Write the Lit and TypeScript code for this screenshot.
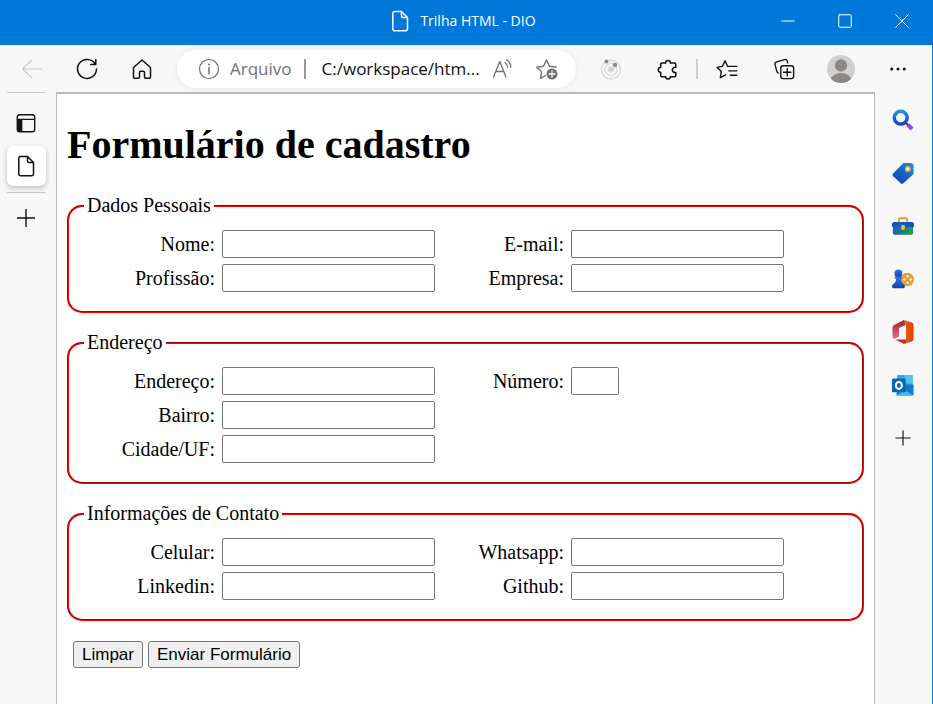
import { LitElement, html, svg, css, TemplateResult } from "lit";
import { customElement } from "lit/decorators.js";

const icon = (size: number, content: TemplateResult) => html`<svg
  width=${size}
  height=${size}
  viewBox="0 0 24 24"
  fill="none"
  stroke="currentColor"
  stroke-width="1.5"
  stroke-linecap="round"
  stroke-linejoin="round"
  aria-hidden="true"
>${content}</svg>`;

const plus = svg`<path d="M12 3v18M3 12h18" stroke-linecap="butt" stroke-width="1.4"/>`;
const page = svg`<path d="M6.500 2.500h7l6 6V20a1.700 1.700 0 0 1-1.700 1.700H6.500A1.700 1.700 0 0 1 4.800 20V4.200a1.700 1.700 0 0 1 1.700-1.700zM13.500 2.500V7A1.500 1.500 0 0 0 15 8.500h4.500"/>`;
const back = svg`<path d="M22 12H3M11.500 3.500 2.500 12l9 8.500" stroke-width="1.2"/>`;
const reload = svg`<path d="M20 6.800A9.500 9.500 0 1 0 21.500 12M20.800 2.500v5h-5"/>`;
const home = svg`<path d="M3.500 10.500 12 3l8.500 7.500V20a1.300 1.300 0 0 1-1.300 1.300h-3.400a1.300 1.300 0 0 1-1.300-1.300v-4.500a1.200 1.200 0 0 0-1.200-1.200h-2.600a1.200 1.200 0 0 0-1.200 1.200V20a1.300 1.300 0 0 1-1.300 1.300H4.800A1.300 1.300 0 0 1 3.500 20z"/>`;
const info = svg`<circle cx="12" cy="12" r="9.500" stroke-width="1.2"/><path d="M12 10.500v6.300"/><circle cx="12" cy="7.500" r="1" fill="currentColor" stroke="none"/>`;
const readAloud = svg`<path d="M2.500 20 8.800 4.500 15 20M4.800 14.500h8M14 5.500q2.500 1.500 2.500 4.500M15.500 2.800q4.500 2.500 4.200 7.500" stroke-width="1.3"/>`;
const starAdd = svg`<path d="M10.500 18.500 5.500 21.300 6.600 14.800 1.800 10.200 8.500 9.200 11.500 3 14.500 9.200 21.200 10.200" stroke-width="1.4"/><circle cx="17" cy="17" r="5.500" fill="currentColor" stroke="none"/><path d="M17 14v6M14 17h6" stroke="#fff" stroke-width="1.3"/>`;
const orbit = svg`<g stroke="#dcdcdc"><circle cx="12" cy="12.500" r="9.500"/><circle cx="12" cy="12.500" r="6"/><circle cx="12" cy="12.500" r="2.500" fill="#cfcfcf"/></g><g fill="#8c8c8c" stroke="none"><circle cx="7.500" cy="4.500" r="2"/><circle cx="16" cy="8" r="2.200"/></g>`;
const puzzle = svg`<path d="M5.500 5.500h4C8.700 1.800 15.300 1.800 14.500 5.500h4.500a1.500 1.500 0 0 1 1.500 1.500v3.200c-5-.6-5 6.200 0 5.600V19a1.500 1.500 0 0 1-1.500 1.500h-4.500c.7 3-5.700 3-5 0h-4A1.500 1.500 0 0 1 4 19v-3.500c-3.500.5-3.500-5.700 0-5.200V7a1.500 1.500 0 0 1 1.500-1.500z" stroke-width="1.700"/>`;
const favorites = svg`<path d="M15 9.200h-2.300L9.800 3 7 9.200 1.200 10.200 5.700 14.800 4.700 21.500 10.500 18.300M15.500 9.200h7.200M14 14h8.700M15.500 18.800h7.200"/>`;
const collections = svg`<rect x="8.500" y="8.500" width="14" height="14" rx="2.500"/><path d="M15.500 11.500v8M11.500 15.500h8M5.800 16.500C4.500 16 4.200 15 4 14L2.200 7.200C1.800 5.500 2.600 4.600 4 4.200l8.700-2.400c1.400-.4 2.500.2 2.800 1.500l.5 2"/>`;
const panel = svg`<rect x="2.500" y="3" width="19" height="18.500" rx="2.800"/><path d="M2.500 8h19" stroke-width="1.200"/><path d="M2.500 7.500h5.500v14H5a2.500 2.500 0 0 1-2.500-2.500z" fill="currentColor" stroke="none"/>`;
const avatar = svg`<g stroke="none"><clipPath id="disc"><circle cx="12" cy="12" r="12"/></clipPath><circle cx="12" cy="12" r="12" fill="#d2d0ce"/><g clip-path="url(#disc)" fill="#8a8886"><circle cx="12" cy="9" r="5.300"/><ellipse cx="12" cy="22.200" rx="9" ry="6.800"/></g></g>`;
const dots = svg`<g fill="currentColor" stroke="none"><circle cx="4.500" cy="12" r="1.800"/><circle cx="12" cy="12" r="1.800"/><circle cx="19.500" cy="12" r="1.800"/></g>`;
const minimize = svg`<path d="M4 12h16" stroke-linecap="butt" stroke-width="1.2"/>`;
const maximize = svg`<rect x="4.500" y="4.500" width="15" height="15" rx="1" stroke-width="1.2"/>`;
const close = svg`<path d="m4.500 4.500 15 15M19.500 4.500l-15 15" stroke-width="1.2"/>`;

const search = svg`<defs><linearGradient id="lens" x2="0" y2="1"><stop stop-color="#2693d1"/><stop offset="1" stop-color="#1640c4"/></linearGradient></defs><path d="m15 15 2.500 2.500" stroke="#454060" stroke-width="2.500"/><path d="m17.500 17.500 4.500 4.300" stroke="#9a45ec" stroke-width="4.500" stroke-linecap="butt"/><circle cx="9.500" cy="9.500" r="7" stroke="url(#lens)" stroke-width="3.800" fill="#f7fbff"/>`;
const tag = svg`<defs><linearGradient id="tag" x1="1" x2="0" y2="1"><stop stop-color="#2d91e3"/><stop offset=".5" stop-color="#1262c3"/><stop offset="1" stop-color="#173dba"/></linearGradient></defs><path d="M12.500 1H21.500L23.500 3V13L12.500 23.200Q11 24.500 9.500 23.200L1 15.200Q0 14 1 12.700z" fill="url(#tag)" stroke="none"/><circle cx="17.300" cy="7.500" r="2.300" fill="#fff" stroke="#f0b42c" stroke-width="1.800"/>`;
const toolbox = svg`<defs><linearGradient id="box" x2="1"><stop stop-color="#1b62b1"/><stop offset=".6" stop-color="#16866c"/><stop offset="1" stop-color="#2b9d4c"/></linearGradient></defs><path d="M7.500 8V5a1.500 1.500 0 0 1 1.500-1.500h6A1.500 1.500 0 0 1 16.500 5v3" stroke="#dfa020" stroke-width="2"/><rect x="1" y="12" width="22" height="9.500" rx="1.500" fill="url(#box)" stroke="none"/><path d="M2 7.500h20L24 9v4H0V9z" fill="#1656ba" stroke="none"/><rect x="10" y="11" width="4" height="5" rx="1" fill="#f4bd34" stroke="none"/>`;
const games = svg`<defs><linearGradient id="pawn" y2="1" x2="0"><stop stop-color="#287edb"/><stop offset="1" stop-color="#173bb3"/></linearGradient></defs><g stroke="none"><circle cx="16.700" cy="12.500" r="7.300" fill="#e1a02b"/><g fill="#fff2cf"><circle cx="13.500" cy="12.500" r="1.400"/><circle cx="17" cy="9" r="1.400"/><circle cx="20.500" cy="12.500" r="1.400"/><circle cx="17" cy="16" r="1.400"/></g><circle cx="7" cy="6" r="4.300" fill="url(#pawn)"/><path d="M3 9.500h8v2.300H9.800c0 3 .5 4.200 3.500 6.200 1 .8 1 3 0 4H.800c-1-1-1-3.200 0-4 3-2 3.500-3.200 3.500-6.200H3z" fill="url(#pawn)"/></g>`;
const office = svg`<defs><linearGradient id="office" y2="1" x2="0"><stop stop-color="#a91b30"/><stop offset="1" stop-color="#dc7490"/></linearGradient><linearGradient id="flap"><stop stop-color="#e8650c"/><stop offset="1" stop-color="#dd3f08"/></linearGradient></defs><g stroke="none"><path d="M13 0 15 5 8 8v8.500L3.500 19Q1.500 18 1.500 16V7.500Q1.500 5.800 3.200 5z" fill="url(#office)"/><path d="M13 0 20.800 2.500Q22.500 3.100 22.500 5v14q0 1.900-1.700 2.500L13 24l2-4V4z" fill="url(#flap)"/><path d="M4.500 19.500H15V21q0 2-2 3z" fill="#c5243a"/></g>`;
const outlook = svg`<g stroke="none"><rect x="5.500" y="1" width="17" height="17" rx="1.200" fill="#38a9e8"/><path d="M14 1h7.500a1 1 0 0 1 1 1v8H14z" fill="#50c6f5"/><path d="M5 11.500h18.500V22a1.500 1.500 0 0 1-1.500 1.500H5z" fill="#1679c9"/><path d="m14 17.500 9 6H5z" fill="#48bce9"/><rect x="0" y="5" width="15" height="15" rx="1.300" fill="#0967b9"/></g><ellipse cx="7.500" cy="12.500" rx="3.300" ry="3.800" stroke="#fff" stroke-width="2.200"/>`;

type Field = [label: string, id: string, short?: boolean];
type Group = { legend: string; rows: Field[][] };

const groups: Group[] = [
  { legend: "Dados Pessoais", rows: [
    [["Nome:", "nome"], ["E-mail:", "email"]],
    [["Profissão:", "profissao"], ["Empresa:", "empresa"]],
  ] },
  { legend: "Endereço", rows: [
    [["Endereço:", "endereco"], ["Número:", "numero", true]],
    [["Bairro:", "bairro"]],
    [["Cidade/UF:", "cidade"]],
  ] },
  { legend: "Informações de Contato", rows: [
    [["Celular:", "celular"], ["Whatsapp:", "whatsapp"]],
    [["Linkedin:", "linkedin"], ["Github:", "github"]],
  ] },
];

@customElement("signup-form")
export class SignupForm extends LitElement {
  static styles = css`
    :host { display: block; padding: 10px; font: 20px/23px "Liberation Serif", "Times New Roman", serif; color: #000; }
    .title { margin: 18px 0 26px; font-size: 40px; line-height: 46px; font-weight: bold; }
    .group { margin: 0 0 18px; padding: 10px 15px 16px; min-width: 0; border: 2px groove #f00; border-radius: 15px; }
    .legend { padding: 0 3px; }
    .row { display: grid; grid-template-columns: 131px 213px 122px 213px; column-gap: 7px; align-items: center; height: 34px; }
    .label { text-align: right; }
    .input { box-sizing: border-box; width: 100%; height: 28px; margin: 0; padding: 1px 3px; border: 1px solid #767676; border-radius: 2px; background: #fff; font: 17px "Liberation Sans", Arial, sans-serif; }
    .short { width: 48px; }
    .actions { display: flex; gap: 5px; padding: 2px 6px; }
    .button { box-sizing: border-box; height: 27px; margin: 0; padding: 0 8px; border: 1px solid #767676; border-radius: 3px; background: #efefef; color: #000; font: 17px/20px "Liberation Sans", Arial, sans-serif; }
  `;

  render() {
    return html`<h1 class="title">Formulário de cadastro</h1>
      <form>
        ${groups.map((g) => html`<fieldset class="group">
          <legend class="legend">${g.legend}</legend>
          ${g.rows.map((row) => html`<div class="row">${row.map(([label, id, short]) => html`
            <label class="label" for=${id}>${label}</label>
            <input class="input ${short ? "short" : ""}" id=${id} name=${id} type="text">`)}</div>`)}
        </fieldset>`)}
        <div class="actions">
          <button class="button" type="reset">Limpar</button>
          <button class="button" type="button">Enviar Formulário</button>
        </div>
      </form>`;
  }
}

@customElement("app-root")
export class AppRoot extends LitElement {
  static styles = css`
    :host { display: flex; flex-direction: column; min-height: 100vh; box-sizing: border-box; border-right: 1px solid #0078d7; background: #f7f7f7; color: #111; font: 17px/24px "Open Sans", "Segoe UI", sans-serif; }
    svg { display: block; flex: none; }
    button { display: grid; place-items: center; flex: none; margin: 0; padding: 0; border: 0; background: none; color: inherit; }
    .titlebar { display: grid; grid-template-columns: 1fr auto 1fr; align-items: center; height: 45px; margin-right: -1px; padding-right: 3px; box-sizing: border-box; background: #0078d9; color: #fff; }
    .caption { display: flex; align-items: center; gap: 8px; grid-column: 2; padding: 0 6px 4px 0; font-size: 14px; }
    .controls { display: flex; justify-content: flex-end; padding-bottom: 4px; }
    .control { width: 57px; height: 41px; }
    .toolbar { display: flex; align-items: center; height: 47px; }
    .tool { width: 55px; height: 40px; }
    .nav { display: flex; flex: none; width: 177px; box-sizing: border-box; padding-left: 4px; }
    .faded { color: #c9c9c9; }
    .address { display: flex; flex: 1; min-width: 0; align-items: center; height: 38px; padding: 0 17px 0 20px; box-sizing: border-box; border-radius: 19px; background: #fff; box-shadow: 0 0 5px #e6e6e6; color: #707070; }
    .scheme { margin: 0 12px 0 9px; }
    .bar { width: 2px; height: 20px; background: #999; }
    .url { flex: 1; min-width: 0; margin-left: 16px; overflow: hidden; white-space: nowrap; color: #111; }
    .inline { width: 24px; height: 30px; margin-left: 8px; }
    .inline + .inline { margin-left: 20px; }
    .tools { display: flex; flex: none; align-items: center; width: 356px; padding-left: 6px; box-sizing: border-box; }
    .tools .tool { width: 57px; }
    .divider { flex: none; width: 2px; height: 20px; background: #cfcfcf; }
    .body { display: flex; flex: 1; }
    .tabs { display: flex; flex: none; flex-direction: column; align-items: center; width: 56px; padding-right: 4px; box-sizing: border-box; }
    .rule { width: 39px; height: 1px; background: #c8c8c8; }
    .tab { width: 39px; height: 40px; border-radius: 6px; }
    .panel { margin: 10px 0 3px; }
    .active { margin-bottom: 6px; background: #fff; box-shadow: 0 2px 5px #bbb; }
    .add { margin-top: 5px; }
    .page { flex: 1; min-width: 0; border: 1px solid #bababa; border-top-width: 2px; border-bottom: 0; background: #fff; }
    .side { display: flex; flex: none; flex-direction: column; align-items: center; gap: 23px; width: 57px; padding: 13px 2px 0 0; box-sizing: border-box; }
    .app { width: 40px; height: 30px; }
  `;

  private button(name: string, cls: string, size: number, shape: TemplateResult) {
    return html`<button class=${cls} type="button" aria-label=${name}>${icon(size, shape)}</button>`;
  }

  render() {
    const b = this.button;
    return html`
      <header class="titlebar">
        <div class="caption">${icon(24, page)}<span>Trilha HTML - DIO</span></div>
        <div class="controls">
          ${b("Minimizar", "control", 20, minimize)}${b("Maximizar", "control", 20, maximize)}${b("Fechar", "control", 20, close)}
        </div>
      </header>
      <div class="toolbar">
        <nav class="nav">
          ${b("Voltar", "tool faded", 24, back)}${b("Atualizar", "tool", 24, reload)}${b("Início", "tool", 24, home)}
        </nav>
        <div class="address">
          ${icon(24, info)}<span class="scheme">Arquivo</span><span class="bar"></span>
          <span class="url">C:/workspace/htm...</span>
          ${b("Ler em voz alta", "inline", 24, readAloud)}${b("Adicionar aos favoritos", "inline", 24, starAdd)}
        </div>
        <div class="tools">
          ${b("Extensão", "tool", 24, orbit)}${b("Extensões", "tool", 22, puzzle)}<span class="divider"></span>
          ${b("Favoritos", "tool", 22, favorites)}${b("Coleções", "tool", 22, collections)}${b("Perfil", "tool", 28, avatar)}${b("Mais", "tool", 20, dots)}
        </div>
      </div>
      <div class="body">
        <aside class="tabs">
          <span class="rule"></span>
          ${b("Painel de guias", "tab panel", 22, panel)}${b("Trilha HTML - DIO", "tab active", 24, page)}
          <span class="rule"></span>
          ${b("Nova guia", "tab add", 24, plus)}
        </aside>
        <main class="page"><signup-form></signup-form></main>
        <aside class="side">
          ${b("Pesquisar", "app", 22, search)}${b("Compras", "app", 22, tag)}${b("Ferramentas", "app", 22, toolbox)}
          ${b("Jogos", "app", 22, games)}${b("Office", "app", 24, office)}${b("Outlook", "app", 22, outlook)}${b("Adicionar", "app", 20, plus)}
        </aside>
      </div>`;
  }
}
